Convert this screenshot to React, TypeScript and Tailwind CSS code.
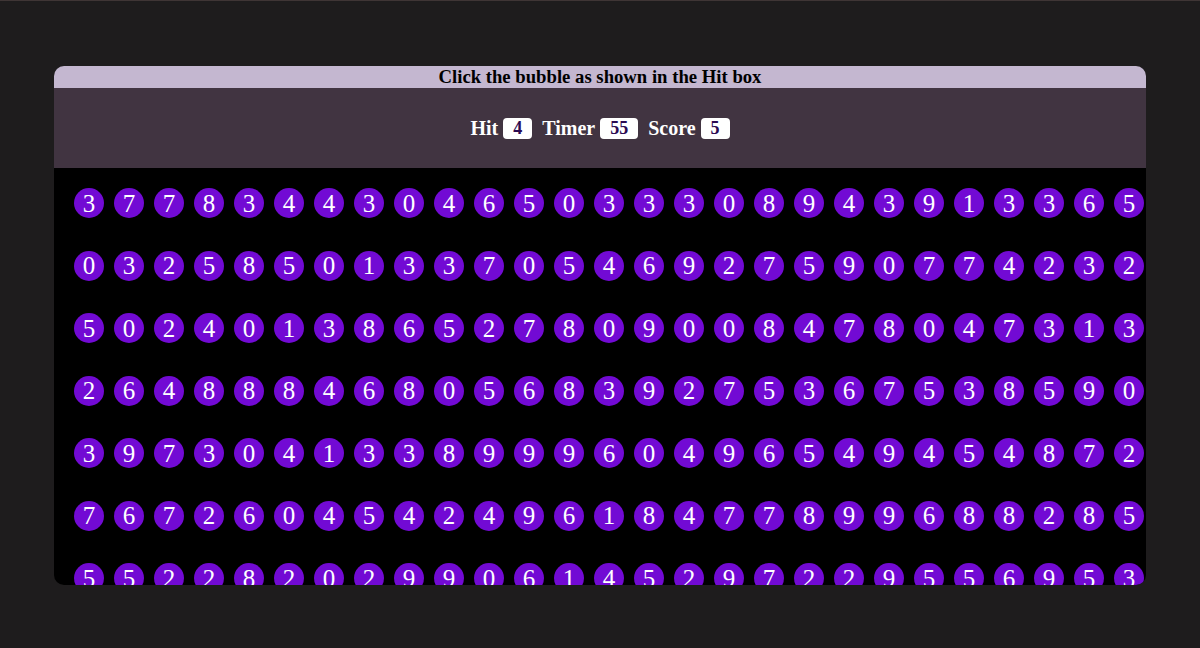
const rows = [
  "377834430465033308943913365",
  "032585013370546927590774232",
  "502401386527809008478047313",
  "264888468056839275367538590",
  "397304133899960496549454872",
  "767260454249618477899688285",
  "552282029906145297229556953",
];

function Stat({ label, value }: { label: string; value: string | number }) {
  return (
    <div className="flex items-center gap-[5px]">
      <span className="text-[20px]">{label}</span>
      <span className="flex h-[21px] items-center rounded-[4px] bg-white px-[10px] text-[18px] text-[#2b0a52]">
        {value}
      </span>
    </div>
  );
}

export default function App() {
  return (
    <div
      className="flex h-[648px] w-full justify-center border-t border-[#3f3535] bg-[#1e1c1d] pt-[65px]"
      style={{ fontFamily: '"Liberation Serif", "Times New Roman", serif' }}
    >
      <div className="flex h-[519px] w-[1092px] flex-col overflow-hidden rounded-[10px]">
        <div className="flex h-[22px] items-center justify-center bg-[#c4b7d0] text-[18.7px] font-bold text-black">
          Click the bubble as shown in the Hit box
        </div>
        <div className="flex h-[80px] items-center justify-center gap-[10px] bg-[#413441] font-bold text-white">
          <Stat label="Hit" value={4} />
          <Stat label="Timer" value={55} />
          <Stat label="Score" value={5} />
        </div>
        <div className="flex-1 overflow-hidden bg-black pl-[20px] pt-[20px]">
          <div className="grid w-max grid-cols-[repeat(27,30px)] gap-x-[10px] gap-y-[32.5px]">
            {rows.flatMap((row, r) =>
              row.split("").map((d, i) => (
                <div
                  key={`${r}-${i}`}
                  className="flex h-[30px] w-[30px] items-center justify-center rounded-full bg-[#720ad4] text-[25px] leading-none text-white"
                >
                  {d}
                </div>
              ))
            )}
          </div>
        </div>
      </div>
    </div>
  );
}
